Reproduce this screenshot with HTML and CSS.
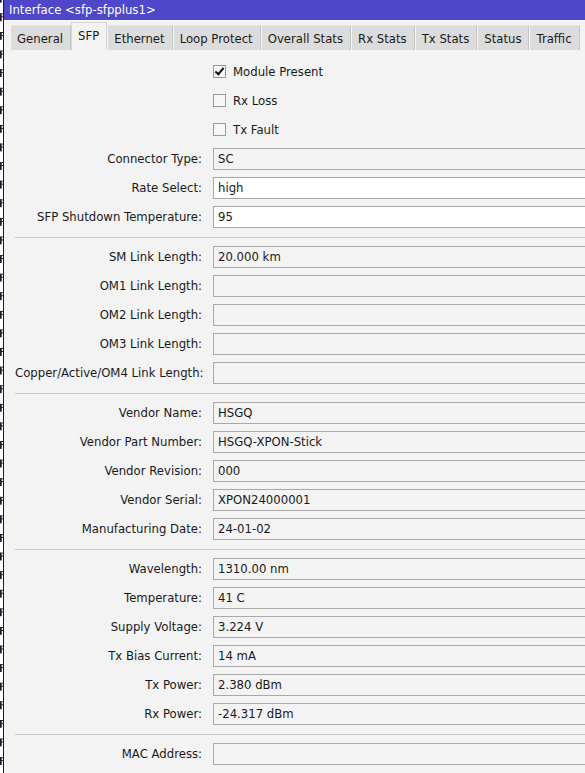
FILE: index.html
```html
<!DOCTYPE html>
<html lang="en">
<head>
    <meta charset="UTF-8">
    <meta name="viewport" content="width=device-width, initial-scale=1.0">
    <title>Interface &lt;sfp-sfpplus1&gt;</title>
    <link rel="stylesheet" href="styles.css">
</head>
<body>
    <div class="desk-edge"></div>
    <div class="window">
        <div class="title-bar">Interface &lt;sfp-sfpplus1&gt;</div>
        <div class="tabs">
            <div class="tab">General</div>
            <div class="tab active">SFP</div>
            <div class="tab">Ethernet</div>
            <div class="tab">Loop Protect</div>
            <div class="tab">Overall Stats</div>
            <div class="tab">Rx Stats</div>
            <div class="tab">Tx Stats</div>
            <div class="tab">Status</div>
            <div class="tab">Traffic</div>
        </div>
        <div class="panel">
            <div class="row">
                <span></span>
                <label class="check"><span class="box checked"></span>Module Present</label>
            </div>
            <div class="row">
                <span></span>
                <label class="check"><span class="box"></span>Rx Loss</label>
            </div>
            <div class="row">
                <span></span>
                <label class="check"><span class="box"></span>Tx Fault</label>
            </div>
            <div class="row"><span class="label">Connector Type:</span><div class="field">SC</div></div>
            <div class="row"><span class="label">Rate Select:</span><div class="field edit">high</div></div>
            <div class="row"><span class="label">SFP Shutdown Temperature:</span><div class="field edit">95</div></div>

            <div class="sep"></div>

            <div class="row"><span class="label">SM Link Length:</span><div class="field">20.000 km</div></div>
            <div class="row"><span class="label">OM1 Link Length:</span><div class="field"></div></div>
            <div class="row"><span class="label">OM2 Link Length:</span><div class="field"></div></div>
            <div class="row"><span class="label">OM3 Link Length:</span><div class="field"></div></div>
            <div class="row"><span class="label">Copper/Active/OM4 Link Length:</span><div class="field"></div></div>

            <div class="sep"></div>

            <div class="row"><span class="label">Vendor Name:</span><div class="field">HSGQ</div></div>
            <div class="row"><span class="label">Vendor Part Number:</span><div class="field">HSGQ-XPON-Stick</div></div>
            <div class="row"><span class="label">Vendor Revision:</span><div class="field">000</div></div>
            <div class="row"><span class="label">Vendor Serial:</span><div class="field">XPON24000001</div></div>
            <div class="row"><span class="label">Manufacturing Date:</span><div class="field">24-01-02</div></div>

            <div class="sep"></div>

            <div class="row"><span class="label">Wavelength:</span><div class="field">1310.00 nm</div></div>
            <div class="row"><span class="label">Temperature:</span><div class="field">41 C</div></div>
            <div class="row"><span class="label">Supply Voltage:</span><div class="field">3.224 V</div></div>
            <div class="row"><span class="label">Tx Bias Current:</span><div class="field">14 mA</div></div>
            <div class="row"><span class="label">Tx Power:</span><div class="field">2.380 dBm</div></div>
            <div class="row"><span class="label">Rx Power:</span><div class="field">-24.317 dBm</div></div>

            <div class="sep"></div>

            <div class="row"><span class="label">MAC Address:</span><div class="field"></div></div>
        </div>
    </div>
</body>
</html>
```

FILE: styles.css
```css
html, body {
    margin: 0;
    padding: 0;
    height: 100%;
}
body {
    display: flex;
    overflow: hidden;
    background-color: #fff;
    font-family: "DejaVu Sans", sans-serif;
    font-size: 11.7px;
    color: #1a1a1a;
}

/* sliver of the window behind: clipped letter stems and arms */
.desk-edge {
    width: 3px;
    flex: none;
    background-color: #fff;
    background-image:
        linear-gradient(#2b1630 0 1px, transparent 1px),
        linear-gradient(transparent 3px, #2b1630 3px 4px, transparent 4px),
        linear-gradient(#2b1630 0 8px, transparent 8px),
        linear-gradient(transparent 1px, #b03838 1px 8px, transparent 8px);
    background-size: 3px 18.6px, 3px 18.6px, 1px 18.6px, 1px 18.6px;
    background-position: 0 32px, 0 32px, 0 32px, 1px 32px;
    background-repeat: repeat-y;
}

.window {
    flex: 1;
    min-width: 0;
    border-left: 1px solid #1b1b1b;
    background-color: #f3f3f3;
    display: flex;
    flex-direction: column;
}
.title-bar {
    height: 20px;
    line-height: 20px;
    padding-left: 5px;
    background-color: #4e47c9;
    color: #fff;
    white-space: nowrap;
}

.tabs {
    display: flex;
    align-items: flex-end;
    height: 30px;
    padding-left: 6px;
    background-color: #f3f3f3;
    border-top: 1px solid #fafafa;
    box-sizing: border-box;
}
.tab {
    height: 24px;
    line-height: 26px;
    padding: 0 7px 0 6px;
    background-color: #dcdcdc;
    border-left: 1px solid #f6f6f6;
    border-right: 1px solid #c4c4c4;
    border-top: 1px solid #e6e6e6;
    white-space: nowrap;
}
.tab.active {
    height: 27px;
    line-height: 26px;
    background-color: #f3f3f3;
    border-left: 1px solid #d6d6d6;
    border-right: 1px solid #d6d6d6;
    border-top: 1px solid #d6d6d6;
}

.panel {
    padding: 7px 0 0 11px;
}
.row {
    display: grid;
    grid-template-columns: 187px 1fr;
    column-gap: 11px;
    align-items: center;
    height: 29px;
}
.label {
    text-align: right;
    white-space: nowrap;
}
.field {
    height: 22px;
    line-height: 20px;
    box-sizing: border-box;
    border: 1px solid #a9a9a9;
    border-right: none;
    padding-left: 4px;
    background-color: #f3f3f3;
    white-space: nowrap;
}
.field.edit {
    background-color: #fff;
}

.check {
    display: flex;
    align-items: center;
    gap: 7px;
}
.box {
    width: 13px;
    height: 13px;
    box-sizing: border-box;
    border: 1px solid #9a9a9a;
    background-color: #f7f7f7;
    position: relative;
}
.box.checked::after {
    content: "";
    position: absolute;
    left: 3px;
    top: 0px;
    width: 3px;
    height: 7px;
    border: solid #111;
    border-width: 0 2px 2px 0;
    transform: rotate(40deg);
}

.sep {
    height: 1px;
    margin: 6px 0 4px;
    background-color: #c9c9c9;
}
```
